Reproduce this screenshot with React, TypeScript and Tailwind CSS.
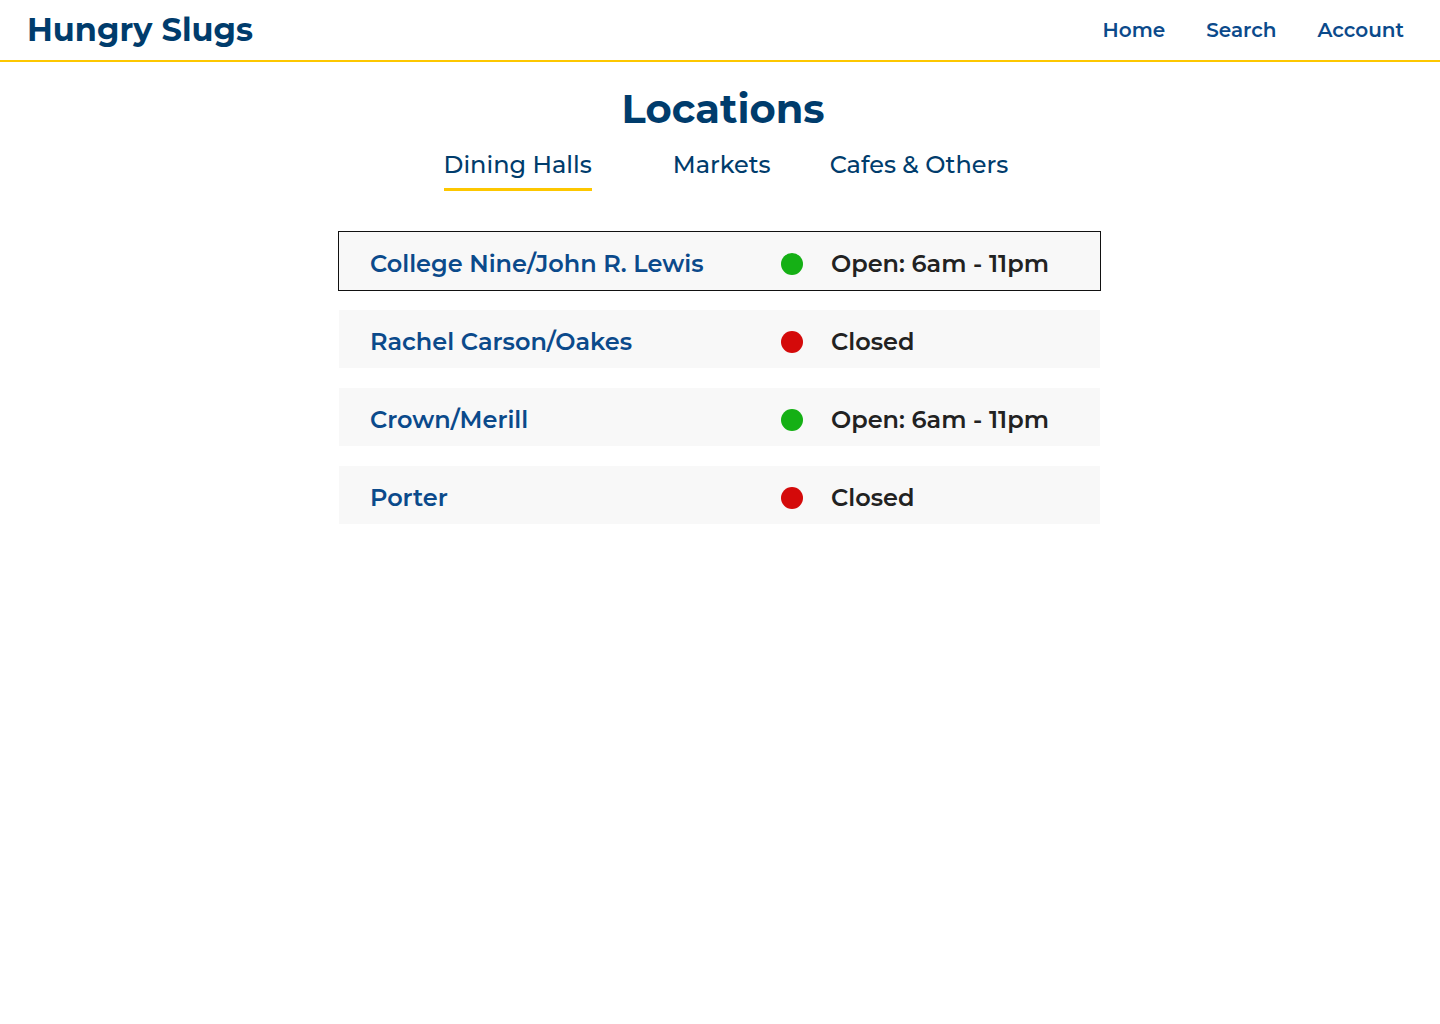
import React from "react";

interface Location {
  id: number;
  name: string;
  open: boolean;
  hours?: string;
}

const locations: Location[] = [
  { id: 1, name: "College Nine/John R. Lewis", open: true, hours: "6am - 11pm" },
  { id: 2, name: "Rachel Carson/Oakes", open: false },
  { id: 3, name: "Crown/Merill", open: true, hours: "6am - 11pm" },
  { id: 4, name: "Porter", open: false },
];

export default function App() {
  return (
    <div className="min-h-screen bg-white font-['Montserrat','Inter',sans-serif]">
      {/* Header */}
      <header className="h-[62px] flex items-center justify-between pl-[27px] pr-[36px] border-b-2 border-[#fdc700]">
        <h1 className="text-[32px] font-bold text-[#003c6c]">Hungry Slugs</h1>
        <nav className="flex items-center gap-[41px] text-[20px] font-semibold text-[#0b4a8b]">
          <a href="#">Home</a>
          <a href="#">Search</a>
          <a href="#">Account</a>
        </nav>
      </header>

      <main className="pt-[23px]">
        <h2 className="text-center text-[40px] leading-[48px] font-bold text-[#003c6c] pl-[6px]">
          Locations
        </h2>

        {/* Tabs */}
        <div className="flex justify-center mt-[16px] text-[24px] leading-[32px] font-medium text-[#003c6c] pl-[12px]">
          <button className="pb-[7px] border-b-[3px] border-[#fdc700]">Dining Halls</button>
          <button className="ml-[81px] pb-[7px] border-b-[3px] border-transparent">Markets</button>
          <button className="ml-[59px] pb-[7px] border-b-[3px] border-transparent">Cafes &amp; Others</button>
        </div>

        {/* Rows */}
        <div className="w-[761px] mt-[41px] ml-[339px] space-y-5">
          {locations.map((loc, i) => (
            <div
              key={loc.id}
              className={`h-[58px] pt-[6px] flex items-center bg-[#f8f8f8] ${
                i === 0 ? "outline outline-1 outline-[#111111]" : ""
              }`}
            >
              <div className="w-[442px] pl-[31px] text-[24px] font-semibold text-[#0b4a8b]">
                {loc.name}
              </div>
              <span
                className={`w-[22px] h-[22px] rounded-full ${
                  loc.open ? "bg-[#15b015]" : "bg-[#d40a0a]"
                }`}
              />
              <div className="ml-[28px] text-[24px] font-semibold text-[#222222]">
                {loc.open ? `Open: ${loc.hours}` : "Closed"}
              </div>
            </div>
          ))}
        </div>
      </main>
    </div>
  );
}
